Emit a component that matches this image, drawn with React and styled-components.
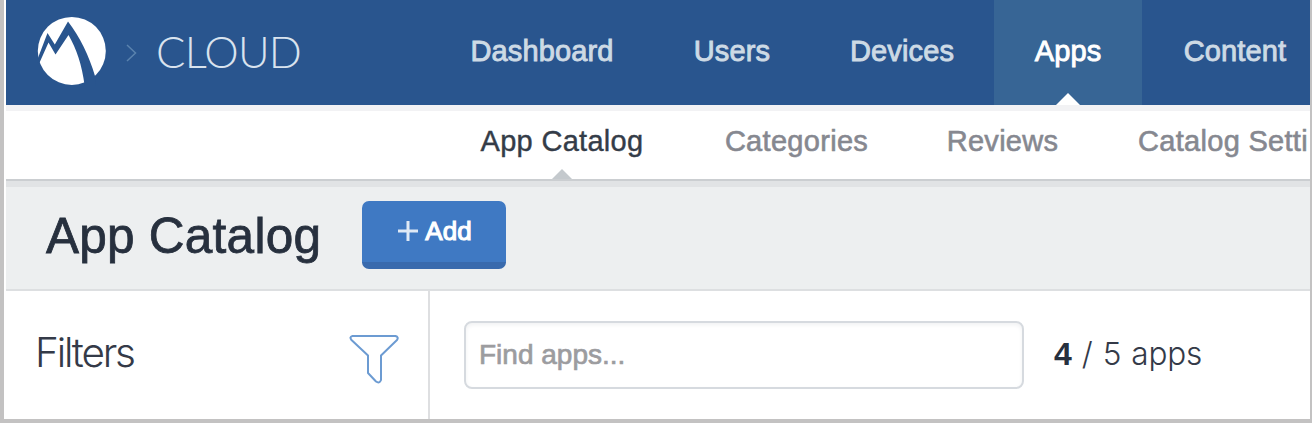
import React from "react";
import styled, { createGlobalStyle } from "styled-components";

const GlobalStyle = createGlobalStyle`
  * { box-sizing: border-box; }
  body { margin: 0; background: #fff; overflow: hidden; font-family: "Liberation Sans", Arial, sans-serif; }
`;

const Frame = styled.div`
  width: 1312px;
  height: 423px;
  padding-left: 2px;
  border: solid #c3c2c2;
  border-width: 0 2px 4px 4px;
  display: flex;
  flex-direction: column;
  overflow: hidden;
`;

const Header = styled.header`
  flex: none;
  display: flex;
  height: 105px;
  background: #29558e;
  overflow: hidden;
`;

const Brand = styled.div`
  flex: none;
  width: 424px;
  padding: 0 0 3px 31px;
  display: flex;
  align-items: center;
`;

const Chevron = styled.svg`
  margin: 4px 0 0 19px;
`;

const BrandName = styled.span`
  margin-left: 19px;
  font: 300 43.5px/50px Lato, sans-serif;
  letter-spacing: -0.7px;
  color: #d9e3ee;
`;

const NavItem = styled.a`
  position: relative;
  flex: none;
  display: flex;
  justify-content: center;
  width: ${(p) => p.$width}px;
  font-size: 29px;
  line-height: 102px;
  letter-spacing: ${(p) => p.$spacing || 0.15}px;
  white-space: nowrap;
  color: ${(p) => (p.$active ? "#fff" : "#cddae5")};
  -webkit-text-stroke: 0.9px currentColor;
  background: ${(p) => (p.$active ? "#376595" : "transparent")};
`;

const Pointer = styled.svg`
  position: absolute;
  bottom: 0;
  left: 50%;
  transform: translateX(-50%);
`;

const SubNav = styled.nav`
  flex: none;
  display: flex;
  height: 76px;
  padding-left: 433px;
  border-top: 6px solid #f2f2f4;
  border-bottom: 2px solid #cbced1;
  overflow: hidden;
`;

const SubItem = styled(NavItem)`
  line-height: 60px;
  color: ${(p) => (p.$active ? "#343c48" : "#868890")};
  -webkit-text-stroke: ${(p) => (p.$active ? 0.4 : 0.6)}px currentColor;
  background: none;
`;

const TitleBar = styled.div`
  flex: none;
  display: flex;
  height: 110px;
  padding: 14px 0 0 40px;
  border-top: 6px solid #e1e3e5;
  border-bottom: 2px solid #dddfe1;
  background: #edeff0;
`;

const Title = styled.h1`
  margin: 0;
  width: 316px;
  font-size: 49.5px;
  font-weight: 400;
  line-height: 70px;
  letter-spacing: 0.25px;
  white-space: nowrap;
  color: #27303e;
  -webkit-text-stroke: 0.8px currentColor;
`;

const AddButton = styled.button`
  width: 144px;
  height: 68px;
  padding: 0 0 1px 2px;
  display: flex;
  align-items: center;
  justify-content: center;
  gap: 7px;
  border: 0;
  border-bottom: 7px solid #396aad;
  border-radius: 7px;
  background: #3f79c3;
  color: #fff;
  font: 400 26px/30px "Liberation Sans", Arial, sans-serif;
  -webkit-text-stroke: 1.1px currentColor;
`;

const Body = styled.main`
  flex: 1;
  display: flex;
`;

const Sidebar = styled.aside`
  flex: none;
  display: flex;
  justify-content: space-between;
  width: 424px;
  padding: 0 29px 0 29px;
  border-right: 2px solid #dedfe1;
`;

const FiltersLabel = styled.h2`
  margin: 0;
  font: 300 40.5px/124px Inter, sans-serif;
  letter-spacing: -2.2px;
  color: #343a48;
`;

const FilterIcon = styled.svg`
  margin-top: 42px;
`;

const Content = styled.section`
  display: flex;
  padding: 30px 0 0 34px;
`;

const Search = styled.input`
  width: 560px;
  height: 68px;
  padding: 0 13px;
  border: 2px solid #d6dadf;
  border-radius: 8px;
  box-shadow: inset 0 2px 4px #f1f2f3;
  background: #fff;
  font: 28px "Liberation Sans", Arial, sans-serif;
  outline: 0;
  &::placeholder {
    color: #9c9c9f;
    opacity: 1;
    -webkit-text-stroke: 0.7px currentColor;
  }
`;

const Count = styled.div`
  margin-left: 30px;
  font: 300 31.5px/65px Inter, sans-serif;
  letter-spacing: -0.2px;
  word-spacing: 1.5px;
  white-space: nowrap;
  color: #343a48;
`;

const CountValue = styled.b`
  font: 700 32px "Liberation Sans", Arial, sans-serif;
  color: #27303e;
`;

const nav = [
  { label: "Dashboard", width: 224 },
  { label: "Users", width: 156 },
  { label: "Devices", width: 184 },
  { label: "Apps", width: 148, active: true },
  { label: "Content", width: 186 },
];

const subNav = [
  { label: "App Catalog", width: 246, active: true },
  { label: "Categories", width: 223 },
  { label: "Reviews", width: 189 },
  { label: "Catalog Setti", width: 252 },
];

function Logo() {
  return (
    <svg width="70" height="70" viewBox="37 16 70 70">
      <circle cx="71.8" cy="50.9" r="34" fill="#fff" />
      <path
        d="M36 63 47.5 33 54.8 44.5 68 21.5C80 37 89 56 95 76L96 88H85C82 65 77 50 68.5 35L55.5 54.5 48.5 42.5 39.8 62Z"
        fill="#29558e"
      />
    </svg>
  );
}

export default function App() {
  return (
    <>
      <GlobalStyle />
      <Frame>
        <Header>
          <Brand>
            <Logo />
            <Chevron width="11" height="18" viewBox="0 0 11 18" fill="none" stroke="#5a83ae" strokeWidth="1.5">
              <path d="M1 1 9.5 9 1 17" />
            </Chevron>
            <BrandName>CLOUD</BrandName>
          </Brand>
          {nav.map((n) => (
            <NavItem key={n.label} $width={n.width} $active={n.active}>
              {n.label}
              {n.active && (
                <Pointer width="24" height="12" viewBox="0 0 24 12">
                  <path d="M0 12 12 0 24 12Z" fill="#fff" />
                </Pointer>
              )}
            </NavItem>
          ))}
        </Header>
        <SubNav>
          {subNav.map((n) => (
            <SubItem key={n.label} $width={n.width} $active={n.active} $spacing={0.3}>
              {n.label}
              {n.active && (
                <Pointer width="20" height="10" viewBox="0 0 20 10">
                  <path d="M0 10 10 0 20 10Z" fill="#c4c9cd" />
                </Pointer>
              )}
            </SubItem>
          ))}
        </SubNav>
        <TitleBar>
          <Title>App Catalog</Title>
          <AddButton>
            <svg width="20" height="20" viewBox="0 0 20 20" stroke="#dfe9f5" strokeWidth="3">
              <path d="M0 10H20M10 0V20" />
            </svg>
            Add
          </AddButton>
        </TitleBar>
        <Body>
          <Sidebar>
            <FiltersLabel>Filters</FiltersLabel>
            <FilterIcon width="50" height="52" viewBox="349 333 50 52" fill="none" stroke="#6c9bd2" strokeWidth="2" strokeLinejoin="round">
              <path d="M352.5 336H395.5Q399 337 397 340L381 355.5V380Q379.500 384 376 381.500L368 373V355.500L351.500 340Q349 337 352.500 336Z" />
            </FilterIcon>
          </Sidebar>
          <Content>
            <Search placeholder="Find apps..." />
            <Count>
              <CountValue>4</CountValue> / 5 apps
            </Count>
          </Content>
        </Body>
      </Frame>
    </>
  );
}
